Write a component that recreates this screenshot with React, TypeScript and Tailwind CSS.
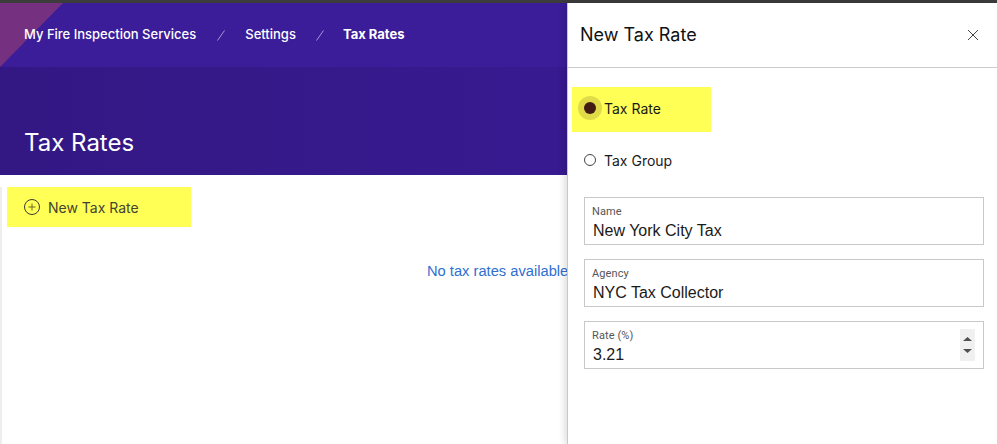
import React from "react";

const inter = "font-['Inter',sans-serif]";

function Field({ label, value, spin }: { label: string; value: string; spin?: boolean }) {
  return (
    <div className="relative h-[48px] border border-[#c8c8c8] pl-[7px] pt-[7px]">
      <div className="font-['Roboto',sans-serif] text-[11px] leading-[14px] text-[#555555] tracking-[0.1px]">{label}</div>
      <div className="mt-[2px] pl-px font-['Liberation_Sans',sans-serif] text-[16px] leading-[20px] text-[#1a1a1a]">{value}</div>
      {spin && (
        <div className="absolute right-[8px] top-[7px] flex h-[32px] w-[15px] flex-col items-center justify-center gap-[8px] bg-[#f0f0f0]">
          <svg width="9" height="4" viewBox="0 0 9 4"><path d="M4.5 0L9 4H0z" fill="#505050" /></svg>
          <svg width="9" height="4" viewBox="0 0 9 4"><path d="M0 0h9L4.5 4z" fill="#505050" /></svg>
        </div>
      )}
    </div>
  );
}

function Slash({ className }: { className: string }) {
  return (
    <span className={`relative block h-[11px] w-[8px] ${className}`}>
      <svg width="8" height="11" viewBox="0 0 8 11"><path d="M0.5 10.5L7.5 0.5" stroke="#a597d8" strokeWidth="1" fill="none" /></svg>
    </span>
  );
}

export default function App() {
  return (
    <div className={`relative h-[444px] w-[997px] overflow-hidden bg-white ${inter}`}>
      <div className="h-[3px] bg-[#3c3c3c]" />
      <header className="h-[172px] bg-gradient-to-r from-[#331884] to-[#3b1c99]">
        <nav className="relative flex h-[64px] items-center bg-[#3b1c99] pl-[24px] text-[13px] font-medium text-white">
          <svg className="absolute left-0 top-0" width="64" height="64" viewBox="0 0 64 64">
            <path d="M0 0H63L0 64z" fill="#75317f" />
          </svg>
          <span className="relative">My Fire Inspection Services</span>
          <Slash className="ml-[21px] mr-[20px]" />
          <span className="relative">Settings</span>
          <Slash className="ml-[20px] mr-[19px]" />
          <span className="relative font-bold">Tax Rates</span>
        </nav>
        <h1 className="pl-[24px] pt-[61px] text-[24px] leading-[30px] text-white">Tax Rates</h1>
      </header>
      <main className="h-[269px] border-l-[2px] border-[#eeeeee]">
        <div className="ml-[5px] mt-[12px] flex h-[40px] w-[184px] items-center gap-[8px] bg-[#ffff55] pl-[17px] text-[14px] text-[#444433]">
          <svg width="16" height="16" viewBox="0 0 16 16" fill="none">
            <circle cx="8" cy="8" r="7.5" stroke="#3a3a33" />
            <path d="M8 4.5v7M4.5 8h7" stroke="#6a6a20" />
          </svg>
          <span>New Tax Rate</span>
        </div>
        <p className="ml-[425px] mt-[34px] whitespace-nowrap font-['Liberation_Sans',sans-serif] text-[14.7px] leading-[20px] text-[#2f6fd0]">
          No tax rates available
        </p>
      </main>

      <aside className="absolute bottom-0 right-0 top-[3px] w-[430px] border-l border-[#c8c8c8] bg-white shadow-[-3px_0_6px_rgba(0,0,0,0.12)]">
        <div className="flex h-[65px] items-center justify-between border-b border-[#cccccc] pb-[1px] pl-[12px] pr-[18px]">
          <h2 className="text-[18px] font-normal text-[#111111]">New Tax Rate</h2>
          <svg width="12" height="12" viewBox="0 0 12 12"><path d="M1 1l10 10M11 1L1 11" stroke="#444444" strokeWidth="1" fill="none" /></svg>
        </div>
        <div className="ml-[4px] mt-[19px] flex h-[45px] w-[139px] items-center bg-[#ffff55] pb-[3px] pl-[6px]">
          <span className="flex h-[24px] w-[24px] items-center justify-center rounded-full bg-[#e0dc48]">
            <span className="h-[12px] w-[12px] rounded-full bg-[#421c12]" />
          </span>
          <span className="ml-[2px] text-[14px] text-[#1a1a1a]">Tax Rate</span>
        </div>
        <div className="ml-[16px] mt-[16px] flex h-[24px] items-center">
          <span className="h-[12px] w-[12px] rounded-full border border-[#444444]" />
          <span className="ml-[8px] text-[14px] text-[#1a1a1a]">Tax Group</span>
        </div>
        <div className="ml-[16px] mr-[13px] mt-[25px] flex flex-col gap-[14px]">
          <Field label="Name" value="New York City Tax" />
          <Field label="Agency" value="NYC Tax Collector" />
          <Field label="Rate (%)" value="3.21" spin />
        </div>
      </aside>
    </div>
  );
}
